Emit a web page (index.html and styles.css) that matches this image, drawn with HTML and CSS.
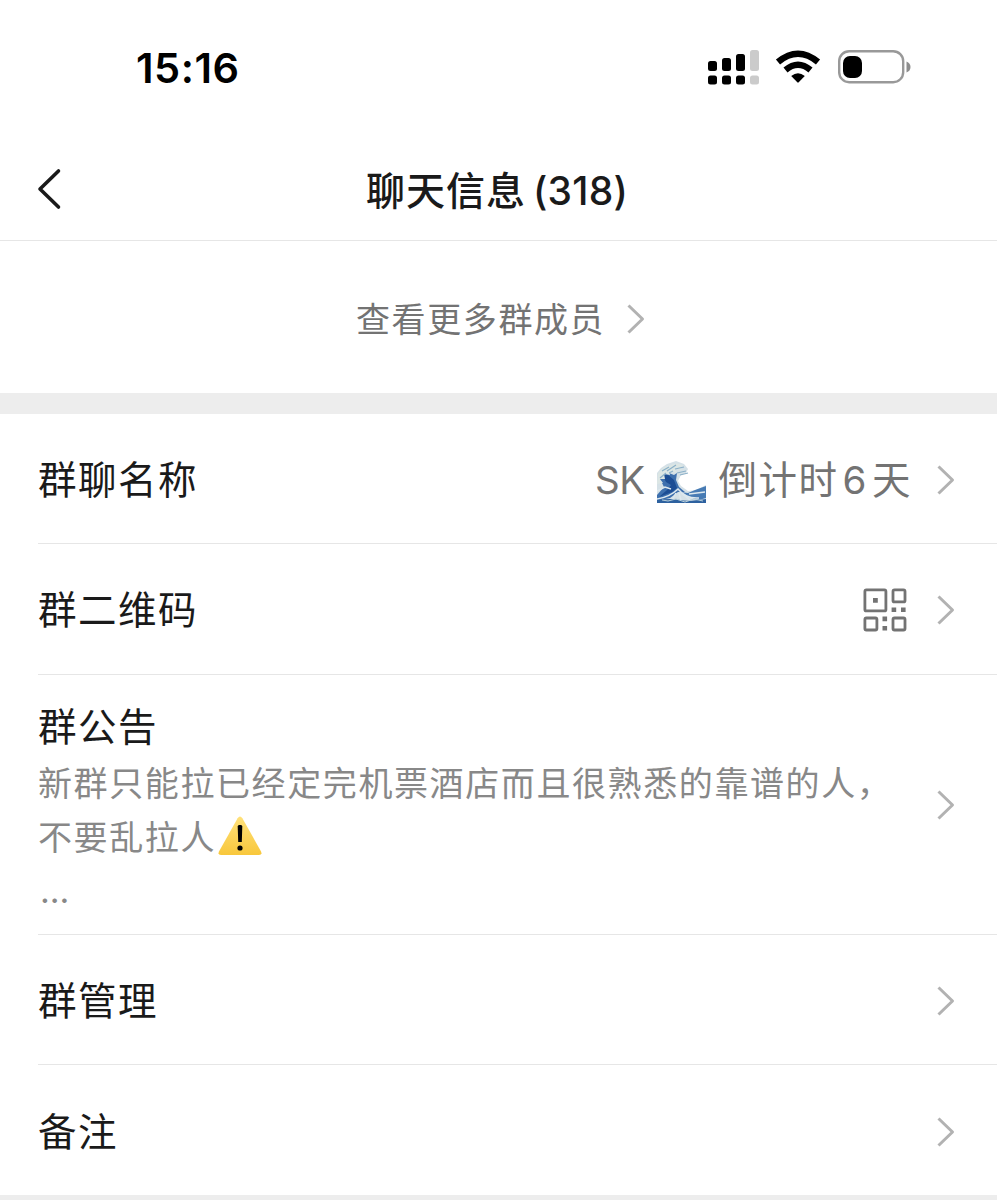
FILE: index.html
```html
<!DOCTYPE html>
<html lang="zh-CN">
<head>
  <meta charset="UTF-8" />
  <title>聊天信息</title>
  <meta name="viewport" content="width=device-width, initial-scale=1" />
  <link rel="stylesheet" href="styles.css">
</head>
<body>
  <svg width="0" height="0" class="defs">
    <symbol id="arrow" viewBox="0 0 20 32">
      <path d="M2.5 2.500L16.500 16L2.500 29.500" fill="none" stroke="#b2b2b2" stroke-width="3" stroke-linejoin="round" />
    </symbol>
  </svg>

  <div class="status">
    <span class="time">15:16</span>
    <div class="status-icons">
      <svg class="signal" width="51" height="36" viewBox="0 0 51 36">
        <rect x="0" y="11" width="9" height="10" rx="2.500" />
        <rect x="14" y="8" width="9" height="13" rx="2.500" />
        <rect x="28" y="4" width="9" height="17" rx="2.500" />
        <rect x="42" y="0" width="9" height="21" rx="2.500" fill="#cbcbcb" />
        <rect x="0" y="25.500" width="9" height="9" rx="2.500" />
        <rect x="14" y="25.500" width="9" height="9" rx="2.500" />
        <rect x="28" y="25.500" width="9" height="9" rx="2.500" />
        <rect x="42" y="25.500" width="9" height="9" rx="2.500" fill="#cbcbcb" />
      </svg>
      <svg class="wifi" width="46" height="34" viewBox="0 0 46 34">
        <path d="M3 12Q23 -4.500 43 12" fill="none" stroke="#000" stroke-width="6.500" />
        <path d="M10.500 20Q23 9.500 35.500 20" fill="none" stroke="#000" stroke-width="6.300" />
        <path d="M16.200 26Q23 20.500 29.800 26L23.700 32.300Q23 33 22.300 32.300Z" />
      </svg>
      <svg class="battery" width="74" height="34" viewBox="0 0 74 34">
        <rect x="1.200" y="1.200" width="64" height="31" rx="10" fill="none" stroke="#999" stroke-width="2.400" />
        <rect x="5" y="6" width="19" height="22" rx="7" />
        <path d="M68.500 11.500Q72.500 13 72.500 17T68.500 22.500Z" fill="#8d8d8d" />
      </svg>
    </div>
  </div>

  <div class="nav">
    <svg class="back" width="26" height="42" viewBox="0 0 26 42">
      <path d="M22.500 3L4 21L22.500 39" fill="none" stroke="#1a1a1a" stroke-width="3.600" stroke-linecap="round" stroke-linejoin="round" />
    </svg>
    <h1>聊天信息<span class="count">(318)</span></h1>
  </div>

  <div class="more">
    <span>查看更多群成员</span>
    <svg class="arrow"><use href="#arrow" /></svg>
  </div>

  <div class="list">
    <div class="row">
      <span class="label">群聊名称</span>
      <span class="value">
        <span class="sk">SK</span>
        <svg class="wave" width="49" height="42" viewBox="0 0 49 42">
          <path d="M0 12L4 7L10 3L19 0L27 3L31 8L29 12L24 14L21 20L24 25L31 30L39 29L49 24V42H0Z" fill="#d5e1e7" />
          <path d="M24 15L22 20L26 25L32 29L49 23V1L32 2L33 12Z" fill="#fff" />
          <path d="M1 17L6 13L12 12L17 14L20 12L19 19L22 26L28 31L21 31L13 37L0 40V34L7 26L4 20Z" fill="#3e70ae" />
          <path d="M6 15L10 13L17 19L20 27L15 31L2 36L10 29L14 24L9 21Z" fill="#1c4d94" />
          <path d="M24 31L31 32L38 29L49 25V37L42 39L32 36Z" fill="#477bb4" />
          <path d="M1 13Q6 5 12 5Q20 0 27 5L23 6L25 9L18 8L20 12L12 10L13 14L7 13L8 18L3 18L6 22L0 23Z" fill="#dce6e4" />
          <path d="M5 10L12 6M10 10L19 4M18 8L27 6M3 17L9 12M12 12L16 10M20 12L29 10M23 14L31 12" stroke="#8bb0c8" stroke-width="1.200" fill="none" />
          <path d="M0 30L8 26L14 28M0 38Q13 36 21 28Q29 38 42 37M19 32L15 39M22 32L24 39M24 32L33 39M32 33L48 31" fill="none" stroke="#dde8ee" stroke-width="1.500" />
          <path d="M0 39Q15 37 23 39T49 38V42H0Z" fill="#2d619f" />
          <path d="M5 39L11 40L19 38L28 41L37 38L46 40" fill="none" stroke="#b7ced9" />
        </svg>
        <span>倒计时</span><span class="days">6</span><span>天</span>
      </span>
      <svg class="arrow"><use href="#arrow" /></svg>
    </div>
    <div class="row">
      <span class="label">群二维码</span>
      <svg class="qr" width="44" height="44" viewBox="0 0 44 44">
        <g fill="none" stroke="#737373" stroke-width="2.800">
          <rect x="1.900" y="1.900" width="21" height="21" rx="1.500" />
          <rect x="30" y="1.900" width="12" height="12" rx="1.500" />
          <rect x="1.900" y="30" width="12" height="12" rx="1.500" />
          <rect x="30" y="30" width="12" height="12" rx="1.500" />
        </g>
        <path d="M10 10h4.800v4.800h-4.800zM28.600 19.500h4.600v4.600h-4.600zM38 19.500h4.600v4.600h-4.600zM19.500 28.600h4.600v4.600h-4.600zM19.500 38h4.600v4.600h-4.600z" fill="#737373" />
      </svg>
      <svg class="arrow"><use href="#arrow" /></svg>
    </div>
    <div class="row notice">
      <div class="notice-body">
        <div class="label">群公告</div>
        <div class="text">新群只能拉已经定完机票酒店而且很熟悉的靠谱的人，</div>
        <div class="text">不要乱拉人<svg class="warning" width="46" height="40" viewBox="0 0 46 40">
            <defs>
              <linearGradient id="yellow" x1="0" y1="0" x2="0" y2="1">
                <stop offset="0" stop-color="#ffe17a" />
                <stop offset="1" stop-color="#f8c73c" />
              </linearGradient>
            </defs>
            <path d="M20.600 2.200Q23 -1 25.400 2.200L44 35.500Q45.500 39 42 39H4Q.5 39 2 35.500Z" fill="url(#yellow)" />
            <path d="M20.700 10.500Q20.700 9 22.100 9H23.900Q25.300 9 25.300 10.500L24.800 26H21.200Z" />
            <circle cx="23" cy="32" r="2.600" />
          </svg></div>
        <div class="dots">...</div>
      </div>
      <svg class="arrow"><use href="#arrow" /></svg>
    </div>
    <div class="row">
      <span class="label">群管理</span>
      <svg class="arrow"><use href="#arrow" /></svg>
    </div>
    <div class="row">
      <span class="label">备注</span>
      <svg class="arrow"><use href="#arrow" /></svg>
    </div>
  </div>
</body>
</html>
```

FILE: styles.css
```css
* {
  box-sizing: border-box;
}
body {
  margin: 0;
  height: 1200px;
  overflow: hidden;
  background-color: #ededed;
  color: #1a1a1a;
  font-family: Inter, "Noto Sans CJK SC", sans-serif;
}
svg {
  display: block;
  flex: none;
}
.defs {
  position: absolute;
}
.status {
  display: flex;
  justify-content: space-between;
  height: 138px;
  padding: 47px 85px 0 136px;
  background-color: #fff;
}
.time {
  font-size: 41.500px;
  line-height: 42px;
  font-weight: 600;
  letter-spacing: 0.5px;
  color: #000;
}
.status-icons {
  display: flex;
  align-items: flex-start;
}
.signal {
  margin-top: 3px;
}
.wifi {
  margin: 3px 0 0 16px;
}
.battery {
  margin: 3px 0 0 17px;
}
.nav {
  display: grid;
  grid-template-columns: 80px 1fr 80px;
  align-items: center;
  height: 103px;
  background-color: #fff;
  border-bottom: 1px solid #e6e6e6;
}
.back {
  margin-left: 36px;
}
h1 {
  margin: 0;
  padding-top: 3px;
  padding-right: 3px;
  font-size: 39px;
  line-height: 60px;
  font-weight: 500;
  letter-spacing: 1px;
  text-align: center;
  white-space: nowrap;
}
.count {
  margin-left: 7px;
  letter-spacing: 0.2px;
}
.more {
  display: flex;
  align-items: center;
  height: 152px;
  padding: 4px 0 0 356px;
  background-color: #fff;
  color: #737373;
  font-size: 34px;
  letter-spacing: 1.6px;
}
.more span {
  margin-top: -4px;
}
.more .arrow {
  margin-left: 21px;
}
.arrow {
  width: 20px;
  height: 32px;
}
.list {
  margin-top: 21px;
  height: 781px;
  padding-left: 38px;
  background-color: #fff;
}
.row {
  display: flex;
  align-items: center;
  height: 130.3px;
  padding-top: 2px;
  padding-right: 41px;
  border-bottom: 1px solid #e6e6e6;
}
.row:last-child {
  border-bottom: none;
}
.row .arrow {
  margin-left: 26px;
}
.label {
  margin-right: auto;
  font-size: 38.500px;
  line-height: 58px;
  letter-spacing: 1.500px;
}
.value {
  display: flex;
  align-items: center;
  margin-right: -2px;
  color: #737373;
  font-size: 38.500px;
  line-height: 58px;
  letter-spacing: 1.500px;
}
.sk {
  letter-spacing: -0.5px;
}
.wave {
  margin: 4px 13px 0 12px;
}
.days {
  margin: 0 4px;
}
.qr {
  margin-right: 3px;
}
.notice {
  height: 260.500px;
}
.notice-body {
  flex: 1;
  height: 100%;
  padding-top: 21px;
}
.text {
  display: flex;
  position: relative;
  top: 1px;
  color: #888;
  font-size: 34px;
  line-height: 54px;
  letter-spacing: 1.600px;
  white-space: nowrap;
}
.warning {
  margin: 5px 0 0 1px;
}
.dots {
  padding-left: 2px;
  color: #888;
  font-size: 34px;
  line-height: 54px;
}
```
